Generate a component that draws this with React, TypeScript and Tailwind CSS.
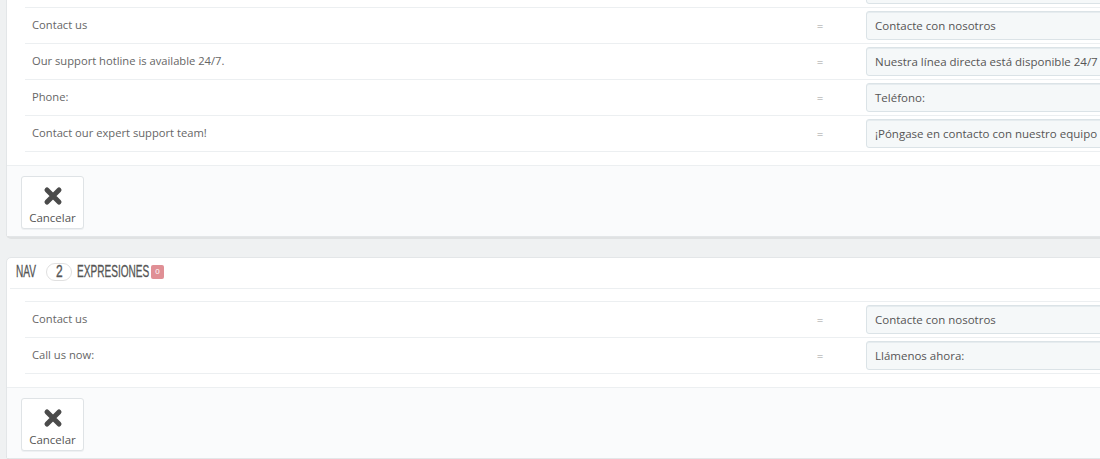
const topRows = [
  { src: "", dst: "" },
  { src: "Contact us", dst: "Contacte con nosotros" },
  { src: "Our support hotline is available 24/7.", dst: "Nuestra línea directa está disponible 24/7" },
  { src: "Phone:", dst: "Teléfono:" },
  { src: "Contact our expert support team!", dst: "¡Póngase en contacto con nuestro equipo de soporte experto!" },
];

const navRows = [
  { src: "Contact us", dst: "Contacte con nosotros" },
  { src: "Call us now:", dst: "Llámenos ahora:" },
];

const condensed = {
  fontFamily: '"Liberation Sans", Arial, sans-serif',
  WebkitTextStroke: "0.3px #555",
};

function CloseIcon() {
  return (
    <svg width="20" height="20" viewBox="0 0 20 20" aria-hidden="true">
      <path d="M4 4 L16 16 M16 4 L4 16" stroke="#4b4b4b" strokeWidth="5" strokeLinecap="round" />
    </svg>
  );
}

function Row({ src, dst }: { src: string; dst: string }) {
  return (
    <div className="grid h-[36px] grid-cols-[765px_60px_1fr] items-center border-t border-[#eceff1]">
      <div className="pl-[7px] text-[11.2px] text-[#666]">{src}</div>
      <div className="text-center text-[#9a9a9a]">{src ? "=" : ""}</div>
      <div className="pl-[16px]">
        <div className="flex h-[29px] items-center overflow-hidden whitespace-nowrap rounded-[3px] border border-[#dbe3e7] bg-[#f5f8f9] pl-[8px] text-[#555] shadow-[inset_0_1px_0_#e6ecef]">
          {dst}
        </div>
      </div>
    </div>
  );
}

function Footer() {
  return (
    <div className="mt-[13px] h-[71px] border-t border-[#eceff1] bg-[#fafbfc] pl-[14px] pt-[10px]">
      <button className="flex h-[53px] w-[63px] flex-col items-center rounded-[3px] border border-[#dfe3e6] bg-white pt-[9px] text-[#555] shadow-[0_1px_0_#eef0f2]">
        <CloseIcon />
        <span className="mt-[5px] text-[11.5px] leading-[14px]">Cancelar</span>
      </button>
    </div>
  );
}

function Squeezed({ text, width }: { text: string; width: string }) {
  return (
    <span className={`inline-block whitespace-nowrap ${width}`}>
      <span className="inline-block origin-left scale-x-[0.63]">{text}</span>
    </span>
  );
}

export default function App() {
  return (
    <div
      className="h-[459px] w-[1100px] overflow-hidden bg-[#eff1f2] text-[11.5px]"
      style={{ fontFamily: '"Open Sans", "DejaVu Sans", sans-serif' }}
    >
      <div className="-mt-[30px] ml-[6px] w-[1200px] rounded-[5px] border border-[#e3e6e8] bg-white shadow-[0_2px_0_rgba(0,0,0,0.06)]">
        <div className="pl-[18px]">
          {topRows.map((r, i) => (
            <Row key={i} {...r} />
          ))}
          <div className="border-t border-[#eceff1]" />
        </div>
        <Footer />
      </div>

      <div className="mt-[20px] ml-[6px] w-[1200px] rounded-[5px] border border-[#e3e6e8] bg-white shadow-[0_2px_0_rgba(0,0,0,0.06)]">
        <div
          className="ml-[3px] flex h-[31px] items-center border-b border-[#eceff1] pb-[3px] pl-[6px] text-[16px] uppercase text-[#555]"
          style={condensed}
        >
          <Squeezed text="NAV" width="w-[21px]" />
          <span className="ml-[9px] flex h-[18px] w-[26px] items-center justify-center rounded-full border border-[#e0e0e0] bg-white text-[16px] text-[#555]">
            <span className="inline-block scale-x-[0.75]">2</span>
          </span>
          <span className="ml-[5px]">
            <Squeezed text="EXPRESIONES" width="w-[72px]" />
          </span>
          <span
            className="ml-[2px] flex h-[14px] w-[13px] items-center justify-center rounded-[2px] bg-[#e08f95] text-[8px] text-white"
            style={{ WebkitTextStroke: "0px" }}
          >
            0
          </span>
        </div>
        <div className="mt-[12px] pl-[18px]">
          {navRows.map((r) => (
            <Row key={r.src} {...r} />
          ))}
          <div className="border-t border-[#eceff1]" />
        </div>
        <Footer />
      </div>
    </div>
  );
}
